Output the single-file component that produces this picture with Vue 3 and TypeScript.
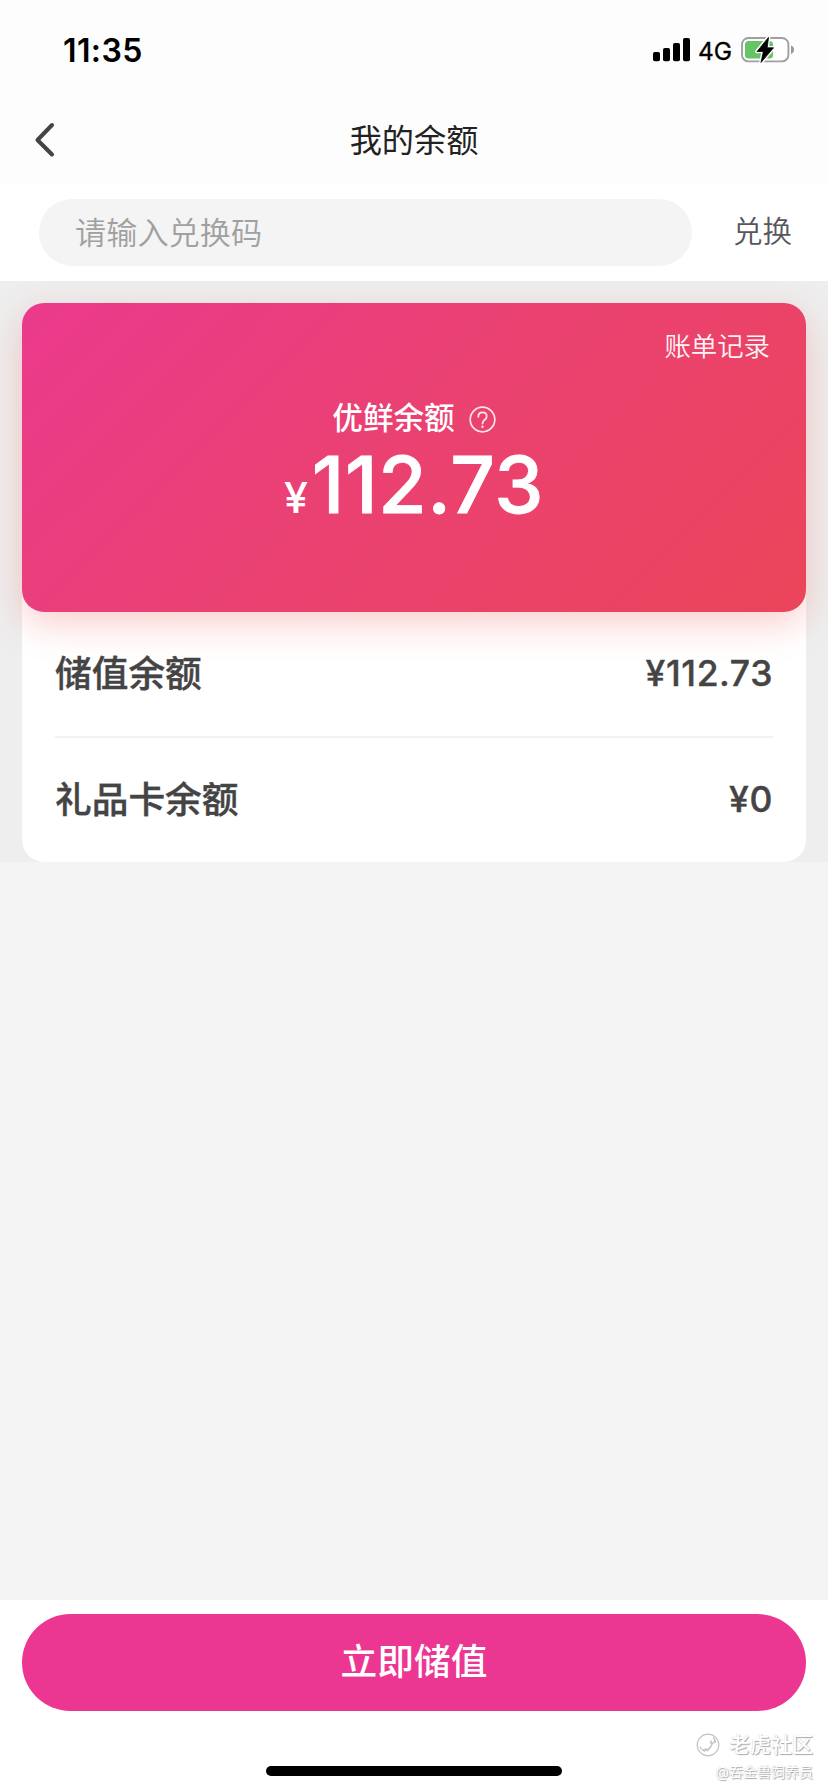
<script setup lang="ts">
interface BalanceRow {
  label: string
  amount: string
}

const total = '112.73'
const rows: BalanceRow[] = [
  { label: '储值余额', amount: '¥112.73' },
  { label: '礼品卡余额', amount: '¥0' },
]
</script>

<template>
  <div class="page">
    <header class="top">
      <div class="status">
        <span class="time">11:35</span>
        <div class="indicators">
          <svg class="signal" width="38" height="24" viewBox="0 0 38 24">
            <rect x="0" y="14" width="7" height="9.2" rx="1.8" />
            <rect x="10" y="10" width="7" height="13.2" rx="1.8" />
            <rect x="20" y="5" width="7" height="18.2" rx="1.8" />
            <rect x="30" y="0" width="7" height="23.2" rx="1.8" />
          </svg>
          <span class="network">4G</span>
          <svg class="battery" width="54" height="28" viewBox="0 0 54 28">
            <rect x="1" y="2" width="46.4" height="23.4" rx="6.5" fill="#fff" stroke="#a0a0a2" stroke-width="1.9" />
            <path d="M50 9.500c2 .6 3 2.300 3 4.200s-1 3.600-3 4.200z" fill="#98989b" />
            <rect x="4" y="5" width="28" height="17.500" rx="3.500" fill="#65c466" />
            <path d="M27.500 1.400 16 15.500h6.300L20 26.500 32.500 11.800h-6.300z" fill="#000" stroke="#fff" stroke-width="3.600" stroke-linejoin="round" />
            <path d="M27.500 1.400 16 15.500h6.300L20 26.500 32.500 11.800h-6.300z" fill="#000" stroke="#000" stroke-width=".8" stroke-linejoin="round" />
          </svg>
        </div>
      </div>
      <nav class="nav">
        <svg class="back" width="22" height="36" viewBox="0 0 22 36">
          <path d="M18 3 3.500 18 18 32.500" fill="none" stroke="#444" stroke-width="4" stroke-linecap="round" stroke-linejoin="round" />
        </svg>
        <h1 class="title">我的余额</h1>
      </nav>
    </header>

    <section class="redeem">
      <div class="field"><span class="placeholder">请输入兑换码</span></div>
      <span class="redeem-action">兑换</span>
    </section>

    <main class="wallet">
      <div class="panel">
        <div class="card">
          <div class="history">账单记录</div>
          <div class="card-title">
            <span>优鲜余额</span>
            <svg class="help" width="27" height="27" viewBox="0 0 27 27" fill="none" stroke="#fff" stroke-linecap="round" opacity=".86">
              <circle cx="13.500" cy="13.500" r="12.300" stroke-width="1.700" />
              <path d="M9.300 10.800c0-2.600 1.700-4.400 4.200-4.400s4.200 1.700 4.200 4c0 3.300-4.200 3.500-4.200 7.200" stroke-width="1.800" />
              <circle cx="13.500" cy="20.800" r=".6" stroke-width="1.200" />
            </svg>
          </div>
          <div class="sum"><span class="currency">¥</span><span class="value">{{ total }}</span></div>
        </div>
        <div v-for="row in rows" :key="row.label" class="row">
          <span class="label">{{ row.label }}</span>
          <span class="amount">{{ row.amount }}</span>
        </div>
      </div>
    </main>

    <footer class="footer">
      <button class="recharge" type="button">立即储值</button>
      <div class="home-bar"></div>
      <div class="mark">
        <div class="mark-brand">
          <svg width="24" height="24" viewBox="0 0 24 24" fill="none" stroke="#c3c3c8" stroke-width="1.200">
            <circle cx="12" cy="12" r="10.800" />
            <path d="M17 4.500c3 2 1.500 5-.8 6.200-1.400 4-4 6.300-7.200 6.300M6 16.500l2.500 1.500 1-2 2 1.500 1.500-2M15.500 7.500l-1 3.200" stroke-width="1.500" />
            <path d="M4 13.500l1.500 3M19 7l.5 3" />
          </svg>
          <span>老虎社区</span>
        </div>
        <div class="mark-user">@吞金兽饲养员</div>
      </div>
    </footer>
  </div>
</template>

<style>
html,
body {
  margin: 0;
  background: #f4f4f4;
}
</style>

<style scoped>
.page {
  display: flex;
  flex-direction: column;
  width: 828px;
  height: 1792px;
  overflow: hidden;
  background: #f4f4f4;
  font-family: Inter, 'Noto Sans CJK SC', sans-serif;
}

.top {
  height: 185px;
  background: #fdfdfd;
}

.status {
  display: flex;
  justify-content: space-between;
  align-items: center;
  height: 99px;
  padding: 0 33px 0 63px;
  box-sizing: border-box;
}

.time {
  padding-top: 1px;
  font-size: 32px;
  font-weight: 600;
  letter-spacing: 0.4px;
  color: #000;
}

.indicators {
  display: flex;
  align-items: center;
}

.network {
  margin: 2px 9px 0 7px;
  font-size: 24.500px;
  font-weight: 400;
  line-height: 28px;
  -webkit-text-stroke: 0.3px #000;
}

.nav {
  position: relative;
  display: flex;
  align-items: center;
  justify-content: center;
  height: 84px;
}

.back {
  position: absolute;
  left: 34px;
  top: 23px;
}

.title {
  margin: 0;
  font-size: 32.200px;
  font-weight: 400;
  line-height: 48px;
  color: #222;
}

.redeem {
  display: flex;
  align-items: center;
  height: 96px;
  padding: 0 36px 0 39px;
  background: #fff;
}

.field {
  display: flex;
  align-items: center;
  width: 653px;
  height: 67px;
  margin-bottom: 1px;
  padding: 0 0 4px 36px;
  box-sizing: border-box;
  border-radius: 34px;
  background: #f4f4f4;
}

.placeholder {
  font-family: 'Noto Sans CJK SC DemiLight', 'Noto Sans CJK SC', sans-serif;
  font-size: 31.200px;
  font-weight: 350;
  color: #a0a0a0;
}

.redeem-action {
  margin-left: auto;
  padding-bottom: 8px;
  font-family: 'Noto Sans CJK SC DemiLight', 'Noto Sans CJK SC', sans-serif;
  font-size: 29.500px;
  font-weight: 350;
  color: #57575c;
}

.wallet {
  height: 581px;
  padding: 22px 22px 0;
  box-sizing: border-box;
  background: #eee;
}

.panel {
  height: 559px;
  border-radius: 22px;
  background: linear-gradient(to bottom, transparent 40px, #fff 40px);
}

.card {
  height: 309px;
  padding: 22px 36px 0;
  box-sizing: border-box;
  border-radius: 22px;
  background: linear-gradient(135deg, #eb3a8d 0%, #ea4173 45%, #eb455a 100%);
  box-shadow: 0 12px 36px rgba(235, 70, 60, 0.26);
  color: #fff;
}

.history {
  font-family: 'Noto Sans CJK SC DemiLight', 'Noto Sans CJK SC', sans-serif;
  font-size: 26.400px;
  font-weight: 350;
  line-height: 40px;
  text-align: right;
  opacity: 0.94;
}

.card-title {
  display: flex;
  align-items: center;
  justify-content: center;
  gap: 14px;
  margin-top: 33px;
  font-size: 30.600px;
  font-weight: 500;
  line-height: 44px;
}

.card-title span {
  margin-top: -2px;
}

.sum {
  display: flex;
  align-items: baseline;
  justify-content: center;
  line-height: 88px;
  margin-top: 1px;
}

.currency {
  margin-right: 4px;
  font-size: 43px;
  font-weight: 500;
}

.value {
  font-size: 78.500px;
  font-weight: 500;
  letter-spacing: 0.6px;
  -webkit-text-stroke: 0.8px #fff;
}

.row {
  display: flex;
  align-items: center;
  justify-content: space-between;
  height: 124px;
  margin: 0 33px;
  padding-bottom: 1px;
  box-sizing: border-box;
  color: #444;
}

.row + .row {
  padding-bottom: 0;
  border-top: 2px solid #f2f2f2;
}

.label {
  margin-top: -5px;
  font-size: 36.700px;
  font-weight: 500;
  -webkit-text-stroke: 0.4px #444;
}

.amount {
  font-size: 35.500px;
  font-weight: 500;
  letter-spacing: 0.6px;
  -webkit-text-stroke: 0.4px #444;
}

.footer {
  position: relative;
  display: flex;
  flex-direction: column;
  align-items: center;
  height: 192px;
  margin-top: auto;
  background: #fff;
}

.recharge {
  width: 784px;
  height: 97px;
  margin-top: 14px;
  padding: 0 0 8px;
  border: 0;
  border-radius: 49px;
  background: #eb3792;
  color: #fff;
  font-family: inherit;
  font-size: 36.700px;
  font-weight: 500;
}

.home-bar {
  width: 296px;
  height: 10px;
  margin-top: 55px;
  border-radius: 5px;
  background: #000;
}

.mark {
  position: absolute;
  right: 15px;
  bottom: 8px;
  display: flex;
  flex-direction: column;
  align-items: flex-end;
  color: #fff;
  text-shadow: 1px 1px 1px #a9a9ae, 0 0 1px #c4c4ca;
}

.mark-brand {
  display: flex;
  align-items: center;
  gap: 9px;
  font-size: 21px;
  font-weight: 500;
  line-height: 30px;
}

.mark-user {
  font-size: 14px;
  line-height: 24px;
}
</style>
